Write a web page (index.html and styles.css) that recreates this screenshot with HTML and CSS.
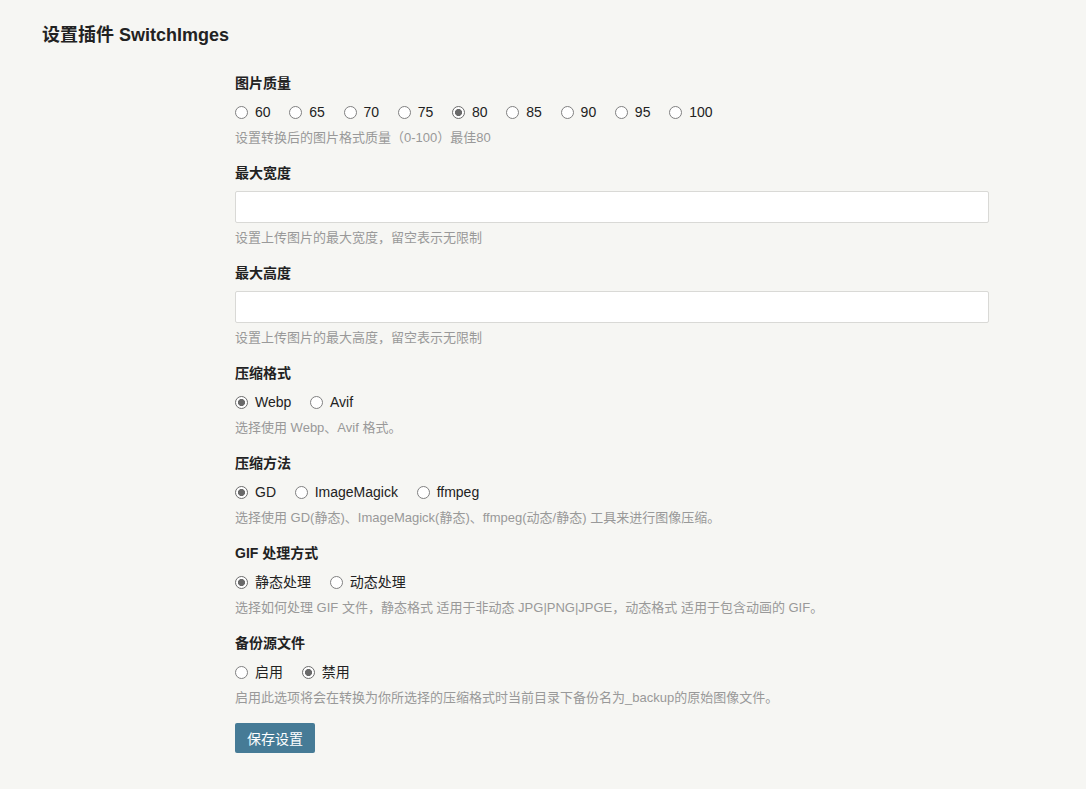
FILE: index.html
```html
<!DOCTYPE html>
<html lang="zh-CN">
<head>
<meta charset="utf-8">
<title>设置插件 SwitchImges</title>
<link rel="stylesheet" href="styles.css">
</head>
<body>
<div class="page">
  <h2 class="page-title">设置插件 SwitchImges</h2>
  <form class="options">
    <div class="option">
      <label class="label">图片质量</label>
      <div class="radios">
        <label class="opt"><input type="radio" name="q"><span>60</span></label>
        <label class="opt"><input type="radio" name="q"><span>65</span></label>
        <label class="opt"><input type="radio" name="q"><span>70</span></label>
        <label class="opt"><input type="radio" name="q"><span>75</span></label>
        <label class="opt"><input type="radio" name="q" checked><span>80</span></label>
        <label class="opt"><input type="radio" name="q"><span>85</span></label>
        <label class="opt"><input type="radio" name="q"><span>90</span></label>
        <label class="opt"><input type="radio" name="q"><span>95</span></label>
        <label class="opt"><input type="radio" name="q"><span>100</span></label>
      </div>
      <p class="desc">设置转换后的图片格式质量（0-100）最佳80</p>
    </div>
    <div class="option">
      <label class="label">最大宽度</label>
      <input class="text" type="text">
      <p class="desc">设置上传图片的最大宽度，留空表示无限制</p>
    </div>
    <div class="option">
      <label class="label">最大高度</label>
      <input class="text" type="text">
      <p class="desc">设置上传图片的最大高度，留空表示无限制</p>
    </div>
    <div class="option">
      <label class="label">压缩格式</label>
      <div class="radios">
        <label class="opt"><input type="radio" name="f" checked><span>Webp</span></label>
        <label class="opt"><input type="radio" name="f"><span>Avif</span></label>
      </div>
      <p class="desc">选择使用 Webp、Avif 格式。</p>
    </div>
    <div class="option">
      <label class="label">压缩方法</label>
      <div class="radios">
        <label class="opt"><input type="radio" name="m" checked><span>GD</span></label>
        <label class="opt"><input type="radio" name="m"><span>ImageMagick</span></label>
        <label class="opt"><input type="radio" name="m"><span>ffmpeg</span></label>
      </div>
      <p class="desc">选择使用 GD(静态)、ImageMagick(静态)、ffmpeg(动态/静态) 工具来进行图像压缩。</p>
    </div>
    <div class="option">
      <label class="label">GIF 处理方式</label>
      <div class="radios">
        <label class="opt"><input type="radio" name="g" checked><span>静态处理</span></label>
        <label class="opt"><input type="radio" name="g"><span>动态处理</span></label>
      </div>
      <p class="desc">选择如何处理 GIF 文件，静态格式 适用于非动态 JPG|PNG|JPGE，动态格式 适用于包含动画的 GIF。</p>
    </div>
    <div class="option">
      <label class="label">备份源文件</label>
      <div class="radios">
        <label class="opt"><input type="radio" name="b"><span>启用</span></label>
        <label class="opt"><input type="radio" name="b" checked><span>禁用</span></label>
      </div>
      <p class="desc">启用此选项将会在转换为你所选择的压缩格式时当前目录下备份名为_backup的原始图像文件。</p>
    </div>
    <div class="submit">
      <button type="button" class="btn">保存设置</button>
    </div>
  </form>
</div>
</body>
</html>
```

FILE: styles.css
```css
html, body {
  margin: 0;
  padding: 0;
  background: #f6f6f3;
}
body {
  font-family: "Liberation Sans", Arial, "Noto Sans CJK SC", sans-serif;
  font-size: 14px;
  color: #333;
}
.page {
  padding: 23px 0 0 42px;
}
.page-title {
  margin: 0;
  font-size: 18px;
  line-height: 24px;
  font-weight: bold;
  color: #222;
}
.options {
  margin: 26px 0 0 193px;
  width: 754px;
  display: flex;
  flex-direction: column;
  gap: 16px;
}
.option {
  display: flex;
  flex-direction: column;
}
.label {
  display: block;
  font-weight: bold;
  line-height: 20px;
  color: #222;
}
.radios {
  display: flex;
  gap: 18.7px;
  margin-top: 9px;
  line-height: 20px;
}
.opt {
  display: inline-flex;
  align-items: center;
  gap: 7px;
  color: #222;
}
.opt input {
  -webkit-appearance: none;
  appearance: none;
  margin: 0;
  width: 13px;
  height: 13px;
  border: 1px solid #808080;
  border-radius: 50%;
  background: #fff;
  box-sizing: border-box;
}
.opt input:checked {
  border-color: #6b6b6b;
  background: radial-gradient(circle, #6a6a6a 0 3.3px, #fff 3.8px);
}
.radios + .desc {
  margin-top: 7px;
}
.text {
  margin-top: 8px;
  box-sizing: border-box;
  width: 100%;
  height: 32px;
  border: 1px solid #d9d9d6;
  border-radius: 2px;
  background: #fff;
  padding: 0 6px;
  font: inherit;
}
.text + .desc {
  margin-top: 6px;
}
.desc {
  margin: 0;
  font-size: 13px;
  line-height: 18px;
  color: #999;
}
.submit {
  display: flex;
}
.btn {
  height: 30px;
  padding: 0 12px;
  border: none;
  border-radius: 2px;
  background: #467b96;
  color: #fff;
  font: inherit;
  font-size: 14px;
  cursor: pointer;
}
```
